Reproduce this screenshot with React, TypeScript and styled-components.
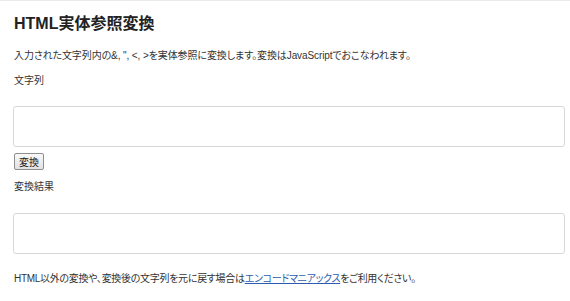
import React from "react";
import styled, { createGlobalStyle } from "styled-components";

const Global = createGlobalStyle`
  html, body { margin: 0; padding: 0; background: #fff; }
  body {
    font-family: "Liberation Sans", Arial, "Noto Sans CJK JP", sans-serif;
    font-feature-settings: "palt" 1;
    color: #333;
  }
`;

const Page = styled.div`
  border-top: 1px solid #eaeaea;
  padding: 0 5px 0 13px;
  display: flex;
  flex-direction: column;
`;

const Title = styled.h1`
  margin: 12px 0 0 1px;
  font-size: 16px;
  line-height: 22px;
  font-weight: bold;
  color: #222;
`;

const Text = styled.p<{ $top: number; $spacing?: number }>`
  margin: ${(p) => p.$top}px 0 0 1px;
  font-size: 10px;
  line-height: 14px;
  letter-spacing: ${(p) => p.$spacing ?? -0.1}px;
  color: #333;
`;

const Label = styled.label<{ $top: number }>`
  display: block;
  margin: ${(p) => p.$top}px 0 0 1px;
  font-size: 10px;
  line-height: 14px;
  color: #333;
`;

const Area = styled.textarea<{ $top: number }>`
  margin: ${(p) => p.$top}px 0 0 0;
  box-sizing: border-box;
  width: 552px;
  height: 41px;
  border: 1px solid #d8d8d8;
  border-radius: 3px;
  resize: none;
  padding: 4px;
  font-family: inherit;
  display: block;
`;

const Button = styled.button`
  align-self: flex-start;
  margin: 6px 0 0 1px;
  box-sizing: border-box;
  width: 30px;
  height: 17px;
  padding: 0;
  font-size: 10px;
  font-family: inherit;
  color: #222;
  background: linear-gradient(#f8f8f8, #e2e2e2);
  border: 1px solid #8f8f8f;
  border-radius: 2px;
`;

const Link = styled.a`
  color: #2a5db0;
  text-decoration: underline;
`;

export default function App() {
  return (
    <>
      <Global />
      <Page>
        <Title>HTML実体参照変換</Title>
        <Text $top={14}>
          入力された文字列内の&amp;, ", &lt;, &gt;を実体参照に変換します。変換はJavaScriptでおこなわれます。
        </Text>
        <Label $top={11}>文字列</Label>
        <Area $top={18} />
        <Button>変換</Button>
        <Label $top={10}>変換結果</Label>
        <Area $top={19} />
        <Text $top={18} $spacing={-0.3}>
          HTML以外の変換や、変換後の文字列を元に戻す場合は<Link href="#">エンコードマニアックス</Link>をご利用ください。
        </Text>
      </Page>
    </>
  );
}
